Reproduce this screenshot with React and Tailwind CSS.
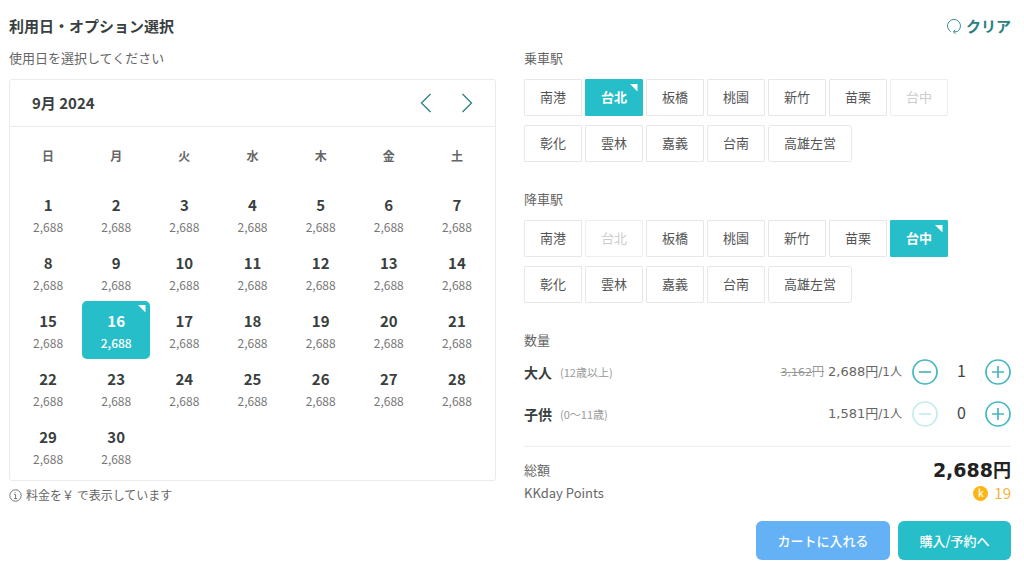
import React, { useState } from "react";

const STATIONS = ["南港", "台北", "板橋", "桃園", "新竹", "苗栗", "台中", "彰化", "雲林", "嘉義", "台南", "高雄左営"];
const WEEKDAYS = ["日", "月", "火", "水", "木", "金", "土"];
const WEEKS = [
  [1, 2, 3, 4, 5, 6, 7],
  [8, 9, 10, 11, 12, 13, 14],
  [15, 16, 17, 18, 19, 20, 21],
  [22, 23, 24, 25, 26, 27, 28],
  [29, 30, null, null, null, null, null]
];

const ADULT_PRICE = 2688;
const CHILD_PRICE = 1581;

// White triangle shown in the top right corner of a selected item
const Corner = () => (
  <svg className="absolute top-1 right-1 text-white" width="8" height="8" viewBox="0 0 8 8" fill="currentColor" aria-hidden="true">
    <path d="M0 0H7.5V7.5Z" />
  </svg>
);

const Calendar = ({ selected, onSelect }) => (
  <div className="border border-[#ebebeb] rounded-[3px]">
    <div className="flex items-center justify-between h-[47px] pl-[22px] pr-4 border-b border-[#ebebeb]">
      <h3 className="text-[15px] font-bold text-[#3a3f40]">9月 2024</h3>
      <div className="flex gap-4 text-[#2b8083]">
        <button type="button" aria-label="前の月" className="w-[25px] h-6 flex items-center justify-center">
          <svg width="12" height="20" viewBox="0 0 12 20" fill="none" stroke="currentColor" strokeWidth="1.3">
            <path d="M10.5 1L1.5 10L10.5 19" />
          </svg>
        </button>
        <button type="button" aria-label="次の月" className="w-[25px] h-6 flex items-center justify-center">
          <svg width="12" height="20" viewBox="0 0 12 20" fill="none" stroke="currentColor" strokeWidth="1.3">
            <path d="M1.5 1L10.5 10L1.5 19" />
          </svg>
        </button>
      </div>
    </div>
    <div className="px-1 pb-[5px]">
      <table className="w-full table-fixed border-collapse text-center">
        <thead>
          <tr>
            {WEEKDAYS.map((d) => (
              <th key={d} className="h-[58px] text-xs font-bold text-[#666]">{d}</th>
            ))}
          </tr>
        </thead>
        <tbody>
          {WEEKS.map((week) => (
            <tr key={week[0]}>
              {week.map((day, i) => (
                <td key={i} className="p-0">
                  {day && (
                    <button
                      type="button"
                      aria-pressed={day === selected}
                      onClick={() => onSelect(day)}
                      className={
                        "relative block w-full pt-2 pb-1.5 rounded-[5px] " +
                        (day === selected ? "bg-[#26bec9] text-white" : "text-[#3a3f40]")
                      }
                    >
                      <span className="block text-[15px] leading-6 font-bold">{day}</span>
                      <span className={"block text-xs leading-5 " + (day === selected ? "font-medium" : "text-[#777]")}>2,688</span>
                      {day === selected && <Corner />}
                    </button>
                  )}
                </td>
              ))}
            </tr>
          ))}
        </tbody>
      </table>
    </div>
  </div>
);

const StationPicker = ({ label, selected, disabled, onSelect }) => (
  <section className="mb-[27px]" aria-label={label}>
    <h3 className="text-[13px] leading-5 text-[#666]">{label}</h3>
    <div className="mt-[11px] mr-12 flex flex-wrap gap-x-[3px] gap-y-[9px]">
      {STATIONS.map((name) => {
        let state = "border-[#e4e8e8] text-[#555]";
        if (name === selected) state = "border-[#26bec9] bg-[#26bec9] text-white font-bold";
        if (name === disabled) state = "border-[#eee] text-[#ccc]";
        return (
          <button
            key={name}
            type="button"
            disabled={name === disabled}
            aria-pressed={name === selected}
            onClick={() => onSelect(name)}
            className={"relative h-[37px] px-[15px] pb-0.5 border rounded-[1px] text-[13px] last:rounded-[3px] " + state}
          >
            {name}
            {name === selected && <Corner />}
          </button>
        );
      })}
    </div>
  </section>
);

const StepButton = ({ label, plus, disabled, onClick }) => (
  <button
    type="button"
    aria-label={label}
    disabled={disabled}
    onClick={onClick}
    className={disabled ? "text-[#c4ecec]" : "text-[#45b8bf]"}
  >
    <svg width="26" height="26" viewBox="0 0 26 26" fill="none" stroke="currentColor" strokeWidth="1.7">
      <circle cx="13" cy="13" r="12" />
      <path d={plus ? "M7 13H19M13 7V19" : "M7 13H19"} />
    </svg>
  </button>
);

const QuantityRow = ({ name, note, oldPrice, price, value, min, onChange }) => (
  <div className="flex items-center h-[42px]">
    <span className="text-sm font-bold text-[#3a3f40]">{name}</span>
    <span className="ml-2 text-[11px] text-[#999]">{note}</span>
    <span className="ml-auto mr-[10px] text-[13px] text-[#666] [font-family:'DejaVu_Sans','Noto_Sans_CJK_JP',sans-serif]">
      {oldPrice && <del className="mr-1 text-[11px] text-[#999]">{oldPrice}<span className="text-xs">円</span></del>}
      {price.toLocaleString("en-US")}円<span className="text-xs">/1人</span>
    </span>
    <StepButton label={name + "を減らす"} disabled={value <= min} onClick={() => onChange(value - 1)} />
    <output className="w-[47px] pb-1 text-center text-base leading-5 text-[#444]">{value}</output>
    <StepButton label={name + "を増やす"} plus onClick={() => onChange(value + 1)} />
  </div>
);

export const BookingOptions = () => {
  const [day, setDay] = useState(16);
  const [from, setFrom] = useState("台北");
  const [to, setTo] = useState("台中");
  const [adults, setAdults] = useState(1);
  const [children, setChildren] = useState(0);

  const total = adults * ADULT_PRICE + children * CHILD_PRICE;

  const clear = () => {
    setDay(null);
    setFrom(null);
    setTo(null);
    setAdults(1);
    setChildren(0);
  };

  return (
    <main className="min-h-screen bg-white pt-4 pb-2 pl-[9px] pr-[13px] [font-family:'Noto_Sans_CJK_JP',sans-serif]">
      <header className="flex items-center justify-between h-5">
        <h2 className="text-[15px] font-bold text-[#3a3f40]">利用日・オプション選択</h2>
        <button type="button" onClick={clear} className="flex items-center gap-1 text-[15px] font-bold text-[#2b8083]">
          <svg width="16" height="16" viewBox="0 0 16 16" fill="none" stroke="currentColor" strokeWidth="0.9" aria-hidden="true">
            <path d="M4.8 13.6A6.5 6.5 0 1 1 11.2 13.6L7.8 13.9" />
            <path d="M9.2 11.7L7.4 14L9.6 15.6" />
          </svg>
          クリア
        </button>
      </header>

      <div className="mt-3 grid grid-cols-2 gap-7 items-start">
        <div>
          <p className="mb-[11px] text-[13px] leading-5 text-[#666]">使用日を選択してください</p>
          <Calendar selected={day} onSelect={setDay} />
          <p className="mt-1 flex items-center gap-1 text-xs leading-5 text-[#666]">
            <svg width="13" height="13" viewBox="0 0 13 13" fill="none" stroke="currentColor" aria-hidden="true">
              <circle cx="6.5" cy="6.5" r="5.7" strokeWidth="0.9" />
              <path d="M5.2 5.5H6.6V9.6M5 9.6H8.2M6.2 3.1V4.1" strokeWidth="0.9" />
            </svg>
            料金を￥ で表示しています
          </p>
        </div>

        <div>
          <StationPicker label="乗車駅" selected={from} disabled={to} onSelect={setFrom} />
          <StationPicker label="降車駅" selected={to} disabled={from} onSelect={setTo} />

          <h3 className="mb-px text-[13px] leading-5 text-[#666]">数量</h3>
          <QuantityRow name="大人" note="(12歳以上)" oldPrice="3,162" price={ADULT_PRICE} value={adults} min={0} onChange={setAdults} />
          <QuantityRow name="子供" note="(0〜11歳)" price={CHILD_PRICE} value={children} min={0} onChange={setChildren} />

          <div className="mt-[11px] pt-3 border-t border-[#eee] text-[13px] text-[#666]">
            <div className="flex items-center justify-between h-[22px]">
              <span>総額</span>
              <strong className="text-[19px] leading-5 font-bold text-[#222] [font-family:'DejaVu_Sans','Noto_Sans_CJK_JP',sans-serif]">
                {total.toLocaleString("en-US")}
                <span className="text-lg leading-5">円</span>
              </strong>
            </div>
            <div className="flex items-center justify-between h-6">
              <span>KKday Points</span>
              <span className="flex items-center gap-[6px] text-[15px] text-[#f0b73d]">
                <span className="size-[15px] rounded-full bg-[#fbb615] text-white text-[10px] leading-[14px] font-medium text-center">k</span>
                19
              </span>
            </div>
          </div>

          <div className="mt-4 flex justify-end gap-2 text-[13px] font-medium text-white">
            <button type="button" className="h-[39px] w-[134px] rounded-[6px] bg-[#64b1f5]">カートに入れる</button>
            <button type="button" className="h-[39px] w-[113px] rounded-[6px] bg-[#26bec9]">購入/予約へ</button>
          </div>
        </div>
      </div>
    </main>
  );
};

export default BookingOptions;
